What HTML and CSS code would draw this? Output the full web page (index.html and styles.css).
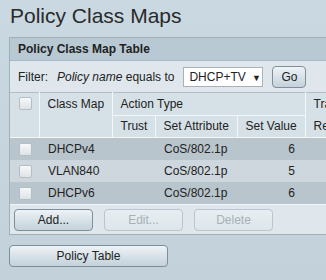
FILE: index.html
```html
<!DOCTYPE html>
<html lang="en">
<head>
    <meta charset="UTF-8">
    <title>Policy Class Maps</title>
    <link rel="stylesheet" href="styles.css">
</head>
<body>
    <h1 class="page-title">Policy Class Maps</h1>

    <div class="panel">
        <div class="panel-head">Policy Class Map Table</div>
        <div class="filter">
            <span>Filter:</span>
            <span class="rule"><i>Policy name</i> equals to</span>
            <span class="select">DHCP+TV <b>&#9660;</b></span>
            <button class="btn go">Go</button>
        </div>
        <table class="grid">
            <colgroup>
                <col class="c-chk">
                <col class="c-name">
                <col class="c-trust">
                <col class="c-attr">
                <col class="c-val">
                <col class="c-more">
            </colgroup>
            <thead>
                <tr>
                    <th rowspan="2" class="chk"><span class="box"></span></th>
                    <th rowspan="2" class="name">Class Map</th>
                    <th colspan="3">Action Type</th>
                    <th rowspan="2" class="more">Tra<br>Re</th>
                </tr>
                <tr>
                    <th>Trust</th>
                    <th>Set Attribute</th>
                    <th>Set Value</th>
                </tr>
            </thead>
            <tbody>
                <tr class="dark">
                    <td class="chk"><span class="box"></span></td>
                    <td>DHCPv4</td><td></td><td>CoS/802.1p</td><td class="num">6</td><td></td>
                </tr>
                <tr>
                    <td class="chk"><span class="box"></span></td>
                    <td>VLAN840</td><td></td><td>CoS/802.1p</td><td class="num">5</td><td></td>
                </tr>
                <tr class="dark">
                    <td class="chk"><span class="box"></span></td>
                    <td>DHCPv6</td><td></td><td>CoS/802.1p</td><td class="num">6</td><td></td>
                </tr>
            </tbody>
        </table>
        <div class="actions">
            <button class="btn">Add...</button>
            <button class="btn" disabled>Edit...</button>
            <button class="btn" disabled>Delete</button>
        </div>
    </div>

    <button class="btn wide">Policy Table</button>
</body>
</html>
```

FILE: styles.css
```css
/* Page */
html,
body {
    overflow: hidden;
}

body {
    margin: 0;
    padding: 0 0 0 9px;
    height: 280px;
    font-family: "Liberation Sans", Arial, sans-serif;
    font-size: 12px;
    color: #222;
    background: linear-gradient(#c9d8e1, #c3d1da);
}

.page-title {
    margin: 0;
    padding: 4px 0 0 1px;
    height: 37px;
    box-sizing: border-box;
    font-size: 21px;
    font-weight: normal;
    color: #2a2a2a;
}

/* Panel */
.panel {
    width: 317px;
    overflow: hidden;
    border: 1px solid #9fb0bb;
    border-right: none;
    background: #dfe7ec;
}

.panel-head {
    height: 22px;
    line-height: 22px;
    padding-left: 8px;
    font-weight: bold;
    background: #b9c9d4;
    border-bottom: 1px solid #a9bac5;
}

.filter {
    display: flex;
    align-items: center;
    height: 31px;
    padding-left: 8px;
    white-space: nowrap;
}

.rule {
    margin-left: 9px;
}

.select {
    width: 80px;
    height: 20px;
    box-sizing: border-box;
    margin-left: 9px;
    padding-left: 5px;
    line-height: 18px;
    border: 1px solid #a7b3bb;
    background: #fff;
}

.select b {
    font-size: 9px;
    margin-left: 3px;
}

/* Buttons */
.btn {
    font-family: inherit;
    font-size: 12px;
    color: #222;
    height: 22px;
    padding: 0;
    border: 1px solid #7e8f9a;
    border-radius: 4px;
    background: linear-gradient(#eef3f6, #d5e0e7 55%, #c4d2db);
}

.btn:disabled {
    color: #a7b0b6;
    border-color: #b9c6ce;
    background: linear-gradient(#e8eef1, #dde6eb);
}

.go {
    width: 34px;
    margin-left: 9px;
}

/* Table */
.grid {
    border-collapse: collapse;
    table-layout: fixed;
    width: 340px;
}

.c-chk { width: 29px; }
.c-name { width: 73px; }
.c-trust { width: 43px; }
.c-attr { width: 82px; }
.c-val { width: 68px; }
.c-more { width: 45px; }

.grid th {
    height: 21px;
    padding: 0 0 0 8px;
    text-align: left;
    font-weight: normal;
    white-space: nowrap;
    background: #d5e0e7;
    border: 1px solid #f4f7f9;
}

.grid thead tr:first-child th {
    border-top-color: #b0bec8;
}

.grid th.chk,
.grid th.name {
    vertical-align: top;
    padding-top: 4px;
}

.grid th.chk {
    border-left: none;
    padding-left: 9px;
}

.grid th.more {
    line-height: 22px;
}

.grid td {
    height: 22px;
    padding: 0 0 0 9px;
    background: #cdd7dd;
}

.grid tr.dark td {
    background: #b9c5cd;
}

.grid td.num {
    text-align: right;
    padding-right: 10px;
}

.box {
    display: block;
    width: 11px;
    height: 11px;
    border: 1px solid #b5bec4;
    border-radius: 2px;
    background: linear-gradient(#f6f8f9, #dde3e7);
}

.actions {
    display: flex;
    gap: 11px;
    padding: 4px 4px 3px;
    border-top: 1px solid #f2f5f7;
}

.actions .btn {
    width: 79px;
}

.wide {
    display: block;
    width: 159px;
    margin-top: 10px;
}
```
